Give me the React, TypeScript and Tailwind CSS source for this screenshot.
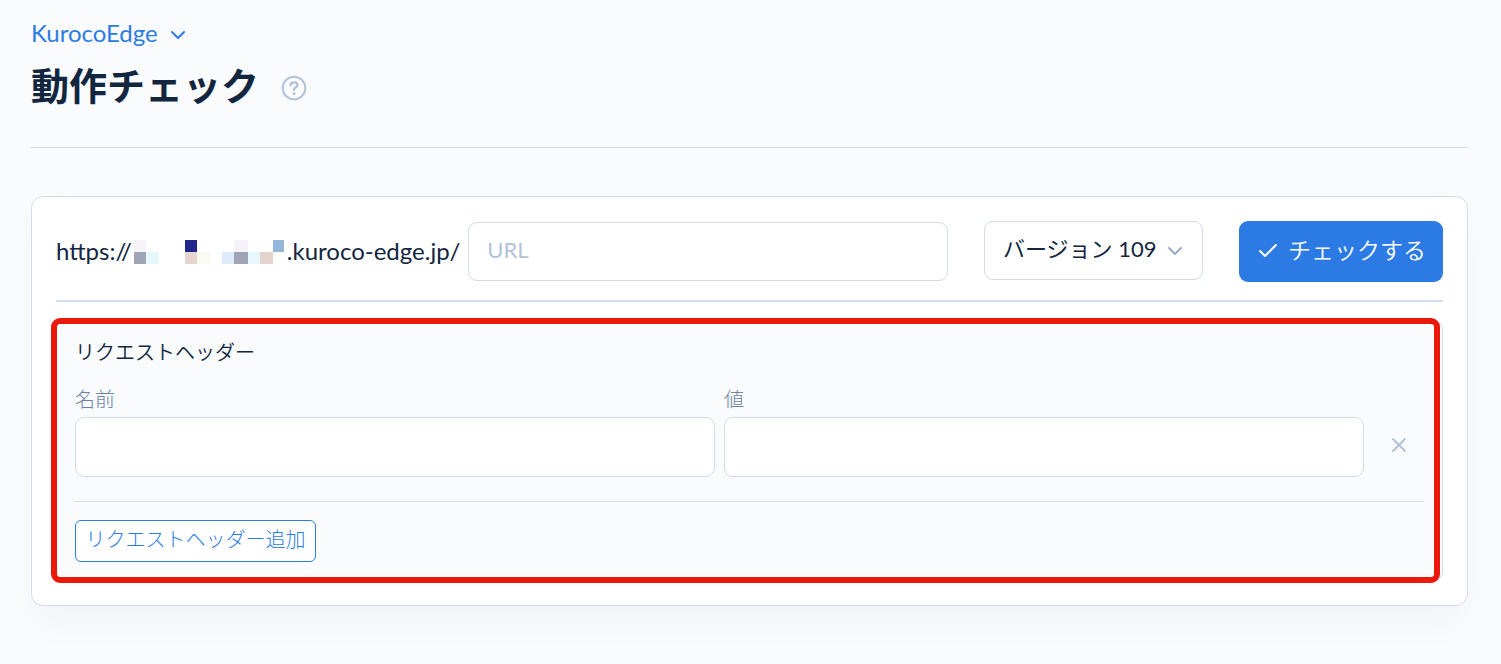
import { useState } from "react";
import { Check, ChevronDown, X } from "lucide-react";

const mosaic: [number, number, number, string][] = [
  [0, 0, 12, "#f6f3f9"],
  [0, 12, 12, "#9fa5b6"],
  [12, 12, 13, "#e7f7fe"],
  [51, 0, 12, "#1f298b"],
  [51, 12, 12, "#e6d5ce"],
  [63, 12, 13, "#fafbf5"],
  [88, 12, 12, "#dbebf9"],
  [100, 0, 14, "#f5f3f9"],
  [100, 12, 14, "#9fa5b6"],
  [114, 12, 12, "#e7f7fe"],
  [126, 12, 13, "#e3d3cc"],
  [139, 0, 11, "#95b6d8"],
];

function HiddenHost() {
  return (
    <svg className="h-6 w-[151px] shrink-0" viewBox="0 0 151 24" shapeRendering="crispEdges" aria-hidden="true">
      {mosaic.map(([x, y, w, fill]) => (
        <rect key={`${x}-${y}`} x={x} y={y} width={w} height={12} fill={fill} />
      ))}
    </svg>
  );
}

function HelpIcon() {
  return (
    <svg className="size-[26px]" viewBox="0 0 26 26" fill="none" stroke="#b1c2d9" strokeWidth="2" strokeLinecap="round" aria-hidden="true">
      <circle cx="13" cy="13" r="11.300" />
      <path d="M9.500 10.300c.1-1.900 1.600-2.900 3.500-2.900s3.500 1.100 3.500 2.800c0 2.300-3.500 2.300-3.500 4.300" strokeWidth="2.400" />
      <circle cx="13" cy="18.500" r="1.500" fill="#b1c2d9" stroke="none" />
    </svg>
  );
}

export default function App() {
  const [rows, setRows] = useState([0]);

  return (
    <div className="min-h-screen bg-[#f9fbfd] pr-[33px] pb-14 pl-[31px] font-['Lato','Noto_Sans_CJK_JP',sans-serif] text-[#12263f]">
      <header className="flex flex-col items-start border-b border-[#d2ddec] pt-4 pb-9">
        <button type="button" className="flex h-[34px] items-center gap-2 text-2xl text-[#2c7be5]">
          KurocoEdge
          <ChevronDown className="mt-1 size-6" />
        </button>
        <div className="mt-2.5 flex h-[51px] items-center gap-[22px]">
          <h1 className="text-[38px] leading-[51px] font-bold">動作チェック</h1>
          <button type="button" aria-label="ヘルプ" className="mt-1">
            <HelpIcon />
          </button>
        </div>
      </header>

      <main className="mt-12 rounded-xl border border-[#d2ddec] bg-white p-6 shadow-[0_18px_36px_rgba(18,38,63,0.03)]">
        <form onSubmit={(e) => e.preventDefault()}>
          <div className="flex items-center gap-9 border-b-2 border-[#d2ddec] pb-[18px]">
            <div className="flex min-w-0 flex-1 items-center gap-2">
              <label htmlFor="url" className="flex items-center gap-0.5 text-2xl whitespace-nowrap">
                <span className="pb-0.5">https://</span>
                <HiddenHost />
                <span className="pb-0.5">.kuroco-edge.jp/</span>
              </label>
              <input
                id="url"
                placeholder="URL"
                className="h-[59px] min-w-0 flex-1 rounded-[9px] border border-[#d2ddec] bg-white px-[18px] pb-1 text-[22px] placeholder:text-[#b1c2d9]"
              />
            </div>
            <div className="relative mb-0.5">
              <select
                aria-label="バージョン"
                className="block h-[59px] w-[219px] appearance-none rounded-[9px] border border-[#d2ddec] bg-white pr-9 pb-1 pl-[18px] text-[22px]"
              >
                <option>バージョン 109</option>
              </select>
              <ChevronDown className="pointer-events-none absolute top-[18px] right-4 size-6 text-[#95aac9]" />
            </div>
            <button
              type="submit"
              className="flex h-[61px] w-[204px] items-center justify-center gap-2 rounded-[9px] bg-[#2c7be5] pb-0.5 text-[23px] font-[350] whitespace-nowrap text-white"
            >
              <Check className="size-6" />
              チェックする
            </button>
          </div>

          <section className="relative mt-[18px] rounded-[9px] border border-[#d2ddec] bg-[#f9fbfd] px-[18px] pt-4 pb-[18px]">
            <h2 className="text-xl leading-[30px] font-[350]">リクエストヘッダー</h2>
            {rows.map((id) => (
              <div key={id} className="mt-4 flex items-end gap-[9px]">
                <div className="flex-1">
                  <label htmlFor={`name-${id}`} className="mb-0.5 block text-xl leading-8 font-light text-[#6e84a3]">
                    名前
                  </label>
                  <input id={`name-${id}`} className="block h-[60px] w-full rounded-[9px] border border-[#d2ddec] bg-white px-[18px] text-[22px]" />
                </div>
                <div className="flex-1">
                  <label htmlFor={`value-${id}`} className="mb-0.5 block text-xl leading-8 font-light text-[#6e84a3]">
                    値
                  </label>
                  <input id={`value-${id}`} className="block h-[60px] w-full rounded-[9px] border border-[#d2ddec] bg-white px-[18px] text-[22px]" />
                </div>
                <button
                  type="button"
                  aria-label="削除"
                  onClick={() => setRows(rows.filter((r) => r !== id))}
                  className="flex h-16 w-[51px] items-center justify-center text-[#b1c2d9]"
                >
                  <X className="size-6" />
                </button>
              </div>
            ))}
            <hr className="mt-6 border-[#d2ddec]" />
            <button
              type="button"
              onClick={() => setRows([...rows, Date.now()])}
              className="mt-[18px] h-[42px] w-[241px] rounded-md border border-[#2c7be5] bg-white pb-1 text-xl font-light whitespace-nowrap text-[#2c7be5]"
            >
              リクエストヘッダー追加
            </button>
            <div className="pointer-events-none absolute -inset-y-[3px] right-0.5 -left-1.5 rounded-[9px] border-[6px] border-[#e9190c]" />
          </section>
        </form>
      </main>
    </div>
  );
}
